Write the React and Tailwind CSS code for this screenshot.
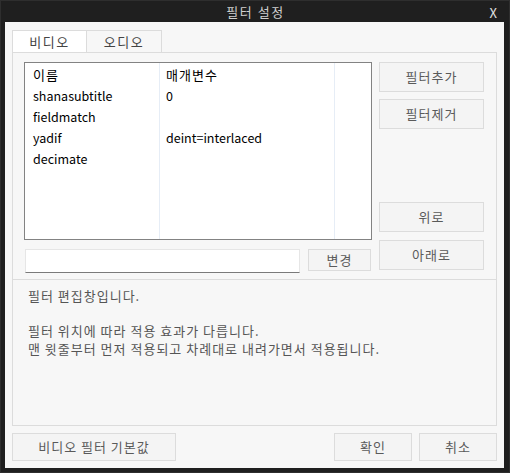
import React from "react";

const F = { fontFamily: '"Noto Sans CJK KR", "Noto Sans", sans-serif' };

function Btn({ children, className = "" }) {
  return (
    <div
      className={
        "flex items-center justify-center border border-[#dcdcdc] bg-[#f4f4f4] text-[13px] tracking-[1px] text-[#5a5a5a] " +
        className
      }
    >
      {children}
    </div>
  );
}

export default function App() {
  const rows = [
    ["shanasubtitle", "0"],
    ["fieldmatch", ""],
    ["yadif", "deint=interlaced"],
    ["decimate", ""],
  ];
  return (
    <div
      className="w-[510px] h-[473px] bg-[#1f1f1f] flex flex-col pl-[4px] pr-[5px] pb-[4px] border border-[#2e2e2e]"
      style={F}
    >
      <div className="h-[21px] flex items-center relative text-[#cfcfcf] text-[13px]">
        <div className="flex-1 text-center tracking-[1.5px] pl-[2px]">필터 설정</div>
        <div className="absolute right-[7px] top-[2px] text-[13px] text-[#e0e0e0]">X</div>
      </div>
      <div className="flex-1 bg-[#f7f7f7] flex flex-col px-[7px] pt-[8px]">
        {/* tabs */}
        <div className="flex h-[22px]">
          <div className="w-[75px] bg-white border border-b-0 border-[#dcdcdc] flex items-center justify-center text-[13px] tracking-[1.5px] text-[#444]">
            비디오
          </div>
          <div className="w-[75px] bg-[#f7f7f7] border border-b-0 border-l-0 border-[#dcdcdc] flex items-center justify-center text-[13px] tracking-[1.5px] text-[#444]">
            오디오
          </div>
        </div>
        {/* panel */}
        <div className="h-[228px] border border-[#dcdcdc] flex pl-[11px] pt-[9px]">
          <div className="w-[348px] flex flex-col">
            <div className="h-[178px] border border-[#838383] bg-white flex text-[12.5px] text-black">
              <div className="w-[135px] border-r border-[#e6edf6] flex flex-col pl-[8px]">
                <div className="h-[22px] flex items-center mt-[1px] text-[13px] tracking-[1px]">이름</div>
                {rows.map((r) => (
                  <div key={r[0]} className="h-[21px] flex items-center">
                    {r[0]}
                  </div>
                ))}
              </div>
              <div className="w-[175px] border-r border-[#e6edf6] flex flex-col pl-[6px]">
                <div className="h-[22px] flex items-center mt-[1px] text-[13px] tracking-[1px]">매개변수</div>
                {rows.map((r) => (
                  <div key={r[0]} className="h-[21px] flex items-center">
                    {r[1]}
                  </div>
                ))}
              </div>
              <div className="flex-1" />
            </div>
            <div className="flex mt-[9px] items-start">
              <div className="ml-[1px] w-[275px] h-[24px] bg-white border border-[#e6e6e6] border-b-[#7a7a7a]" />
              <Btn className="ml-[8px] w-[63px] h-[22px]">변경</Btn>
            </div>
          </div>
          <div className="ml-[7px] w-[105px] flex flex-col">
            <Btn className="h-[30px]">필터추가</Btn>
            <Btn className="h-[30px] mt-[7px]">필터제거</Btn>
            <Btn className="h-[30px] mt-[73px]">위로</Btn>
            <Btn className="h-[30px] mt-[8px]">아래로</Btn>
          </div>
        </div>
        {/* description */}
        <div className="h-[146px] border border-t-0 border-[#dcdcdc] pl-[15px] pt-[7px] text-[13px] tracking-[1px] text-[#555] leading-[18px]">
          <div>필터 편집창입니다.</div>
          <div className="h-[17px]" />
          <div>필터 위치에 따라 적용 효과가 다릅니다.</div>
          <div>맨 윗줄부터 먼저 적용되고 차례대로 내려가면서 적용됩니다.</div>
        </div>
        <div className="flex mt-[7px]">
          <Btn className="w-[164px] h-[28px]">비디오 필터 기본값</Btn>
          <div className="flex-1" />
          <Btn className="w-[78px] h-[28px]">확인</Btn>
          <Btn className="w-[78px] h-[28px] ml-[7px]">취소</Btn>
        </div>
      </div>
    </div>
  );
}
